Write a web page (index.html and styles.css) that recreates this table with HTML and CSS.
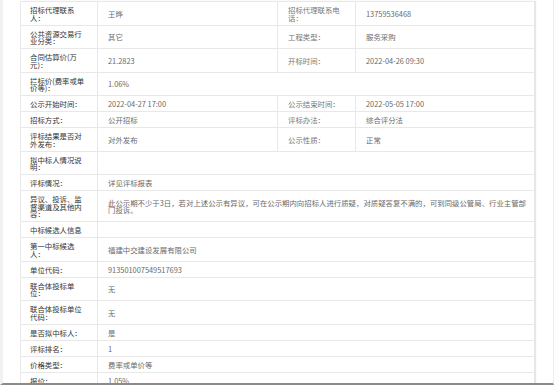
FILE: index.html
```html
<!DOCTYPE html>
<html lang="zh-CN">
<head>
    <meta charset="UTF-8">
    <title>中标候选人公示</title>
    <link rel="stylesheet" href="styles.css">
</head>
<body>
    <div class="page">
        <table class="info-table">
            <colgroup>
                <col class="col-label">
                <col class="col-value">
                <col class="col-label2">
                <col class="col-value2">
            </colgroup>
            <tr>
                <td class="label">招标代理联系人：</td>
                <td class="value">王晔</td>
                <td class="label2">招标代理联系电话：</td>
                <td class="value">13759536468</td>
            </tr>
            <tr>
                <td class="label">公共资源交易行业分类：</td>
                <td class="value">其它</td>
                <td class="label2">工程类型：</td>
                <td class="value">服务采购</td>
            </tr>
            <tr>
                <td class="label">合同估算价(万元)：</td>
                <td class="value">21.2823</td>
                <td class="label2">开标时间：</td>
                <td class="value">2022-04-26 09:30</td>
            </tr>
            <tr>
                <td class="label">拦标价(费率或单价等)：</td>
                <td class="value" colspan="3">1.06%</td>
            </tr>
            <tr>
                <td class="label">公示开始时间：</td>
                <td class="value">2022-04-27 17:00</td>
                <td class="label2">公示结束时间：</td>
                <td class="value">2022-05-05 17:00</td>
            </tr>
            <tr>
                <td class="label">招标方式：</td>
                <td class="value">公开招标</td>
                <td class="label2">评标办法：</td>
                <td class="value">综合评分法</td>
            </tr>
            <tr>
                <td class="label">评标结果是否对外发布：</td>
                <td class="value">对外发布</td>
                <td class="label2">公示性质：</td>
                <td class="value">正常</td>
            </tr>
            <tr>
                <td class="label">拟中标人情况说明：</td>
                <td class="value" colspan="3"></td>
            </tr>
            <tr>
                <td class="label">评标情况：</td>
                <td class="value" colspan="3">详见评标报表</td>
            </tr>
            <tr>
                <td class="label">异议、投诉、监督渠道及其他内容：</td>
                <td class="value long" colspan="3">此公示期不少于3日，若对上述公示有异议，可在公示期内向招标人进行质疑，对质疑答复不满的，可到同级公管局、行业主管部门投诉。</td>
            </tr>
            <tr>
                <td class="label">中标候选人信息</td>
                <td class="value" colspan="3"></td>
            </tr>
            <tr>
                <td class="label">第一中标候选人：</td>
                <td class="value" colspan="3">福建中交建设发展有限公司</td>
            </tr>
            <tr>
                <td class="label">单位代码：</td>
                <td class="value" colspan="3">913501007549517693</td>
            </tr>
            <tr>
                <td class="label">联合体投标单位：</td>
                <td class="value" colspan="3">无</td>
            </tr>
            <tr>
                <td class="label">联合体投标单位代码：</td>
                <td class="value" colspan="3">无</td>
            </tr>
            <tr>
                <td class="label">是否拟中标人：</td>
                <td class="value" colspan="3">是</td>
            </tr>
            <tr>
                <td class="label">评标排名：</td>
                <td class="value" colspan="3">1</td>
            </tr>
            <tr>
                <td class="label">价格类型：</td>
                <td class="value" colspan="3">费率或单价等</td>
            </tr>
            <tr>
                <td class="label">报价：</td>
                <td class="value" colspan="3">1.05%</td>
            </tr>
        </table>
    </div>
</body>
</html>
```

FILE: styles.css
```css
body {
    margin: 0;
    padding: 0;
    background: #fff;
    font-family: "Noto Sans CJK SC", "Noto Sans", sans-serif;
}

.page {
    height: 385px;
    overflow: hidden;
    border-bottom: 2px solid #8a8a8a;
    border-left: 3px solid #f1f1f1;
    border-right: 1px solid #ececec;
    padding: 1px 0 0 17px;
    box-sizing: border-box;
}

.info-table {
    width: 514px;
    border-collapse: collapse;
    table-layout: fixed;
    box-shadow: 1px 0 1px #e6e6e6;
}

.col-label {
    width: 77px;
}

.col-value {
    width: 180px;
}

.col-label2 {
    width: 78px;
}

.col-value2 {
    width: 179px;
}

.info-table td {
    border: 1px solid #e8e8e8;
    font-size: 7.4px;
    line-height: 7.5px;
    padding: 4px 10px 3.5px 10px;
    vertical-align: middle;
    word-break: break-all;
}

.info-table .label {
    padding: 4px 12px 3.5px 9px;
    color: #333;
}

.info-table .label2 {
    padding-right: 11px;
    color: #777;
}

.info-table .value {
    color: #6a6a6a;
}

.info-table .long {
    padding-right: 6px;
}
```
